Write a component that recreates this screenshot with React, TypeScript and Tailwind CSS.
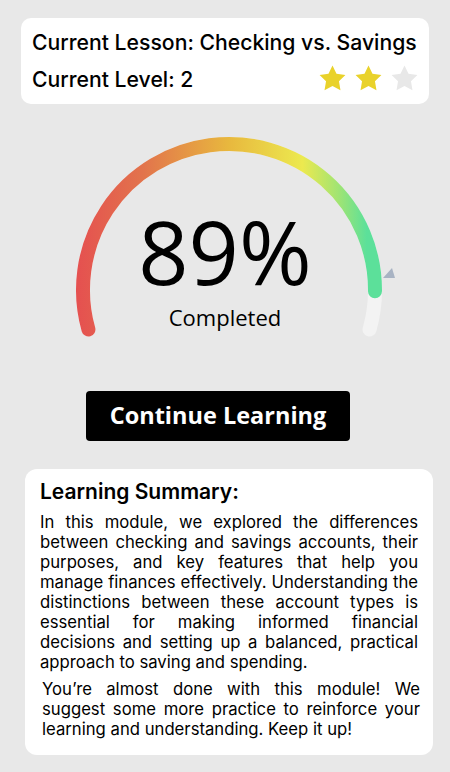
import React from 'react'

const CX = 229
const CY = 186
const R = 146

// point on the gauge circle, angle in degrees (0 = right, counter-clockwise positive)
const pt = (deg: number) => {
  const a = (deg * Math.PI) / 180
  return [CX + R * Math.cos(a), CY - R * Math.sin(a)]
}

const arc = (from: number, to: number) => {
  const [x1, y1] = pt(from)
  const [x2, y2] = pt(to)
  const large = from - to > 180 ? 1 : 0
  return `M ${x1.toFixed(2)} ${y1.toFixed(2)} A ${R} ${R} 0 ${large} 1 ${x2.toFixed(2)} ${y2.toFixed(2)}`
}

function Star({ filled }: { filled: boolean }) {
  return (
    <svg width="31" height="31" viewBox="0 0 24 24">
      <polygon
        points="12,2 15.09,8.26 22,9.27 17,14.14 18.18,21.02 12,17.77 5.82,21.02 7,14.14 2,9.27 8.91,8.26"
        fill={filled ? '#e9d22b' : '#e8e8e8'}
      />
    </svg>
  )
}

function Gauge() {
  return (
    <div className="relative h-[287px] w-full">
      <svg width="450" height="287" className="absolute left-0 top-0">
        <defs>
          <linearGradient id="g" gradientUnits="userSpaceOnUse" x1="76" y1="0" x2="382" y2="0">
            <stop offset="0" stopColor="#e55050" />
            <stop offset="0.22" stopColor="#e2744c" />
            <stop offset="0.5" stopColor="#e8b83e" />
            <stop offset="0.74" stopColor="#ece94f" />
            <stop offset="0.86" stopColor="#9fe474" />
            <stop offset="0.95" stopColor="#5ce09a" />
          </linearGradient>
        </defs>
        <path d={arc(195.7, -15.7)} stroke="#f3f3f3" strokeWidth="14" fill="none" strokeLinecap="round" />
        <path d={arc(195.7, -0.5)} stroke="url(#g)" strokeWidth="14" fill="none" strokeLinecap="round" />
        <polygon points="383,174 395,174 392,164" fill="#a8b3c3" />
      </svg>
      <div className="absolute inset-x-0 top-[103px] flex flex-col items-center font-['Open_Sans',sans-serif] text-black">
        <div className="text-[88px] leading-none">89%</div>
        <div className="mt-[11px] text-[22px] leading-none">Completed</div>
      </div>
    </div>
  )
}

export default function App() {
  return (
    <div className="min-h-[772px] w-[450px] bg-[#e8e8e8] pt-[18px] font-['Inter',sans-serif] text-black">
      <div className="mx-[21px] h-[86px] rounded-[10px] bg-white pl-[11px] pr-[12px] pt-[11px]">
        <div className="text-[21.2px] font-medium leading-[26px]">Current Lesson: Checking vs. Savings</div>
        <div className="mt-[8px] flex items-center justify-between">
          <div className="text-[21.2px] font-medium leading-[26px]">Current Level: 2</div>
          <div className="-mr-[3px] flex gap-[5px]">
            <Star filled />
            <Star filled />
            <Star filled={false} />
          </div>
        </div>
      </div>

      <Gauge />

      <div className="flex justify-center">
        <button className="ml-[-14px] h-[50px] w-[264px] rounded-[4px] bg-black font-['Open_Sans',sans-serif] text-[23.5px] font-bold text-white">
          Continue Learning
        </button>
      </div>

      <div className="mx-[17px] ml-[25px] mt-[28px] rounded-[12px] bg-white px-[15px] pb-[16px] pt-[11px]">
        <h2 className="text-[21px] font-semibold leading-6">Learning Summary:</h2>
        <p className="mt-2 text-justify text-[16.7px] leading-5">
          In this module, we explored the differences between checking and savings accounts, their purposes, and key
          features that help you manage finances effectively. Understanding the distinctions between these account
          types is essential for making informed financial decisions and setting up a balanced, practical approach to
          saving and spending.
        </p>
        <p className="-mr-[2px] ml-[2px] mt-[7px] text-justify text-[16.7px] leading-5">
          You’re almost done with this module! We suggest some more practice to reinforce your learning and
          understanding. Keep it up!
        </p>
      </div>
    </div>
  )
}
